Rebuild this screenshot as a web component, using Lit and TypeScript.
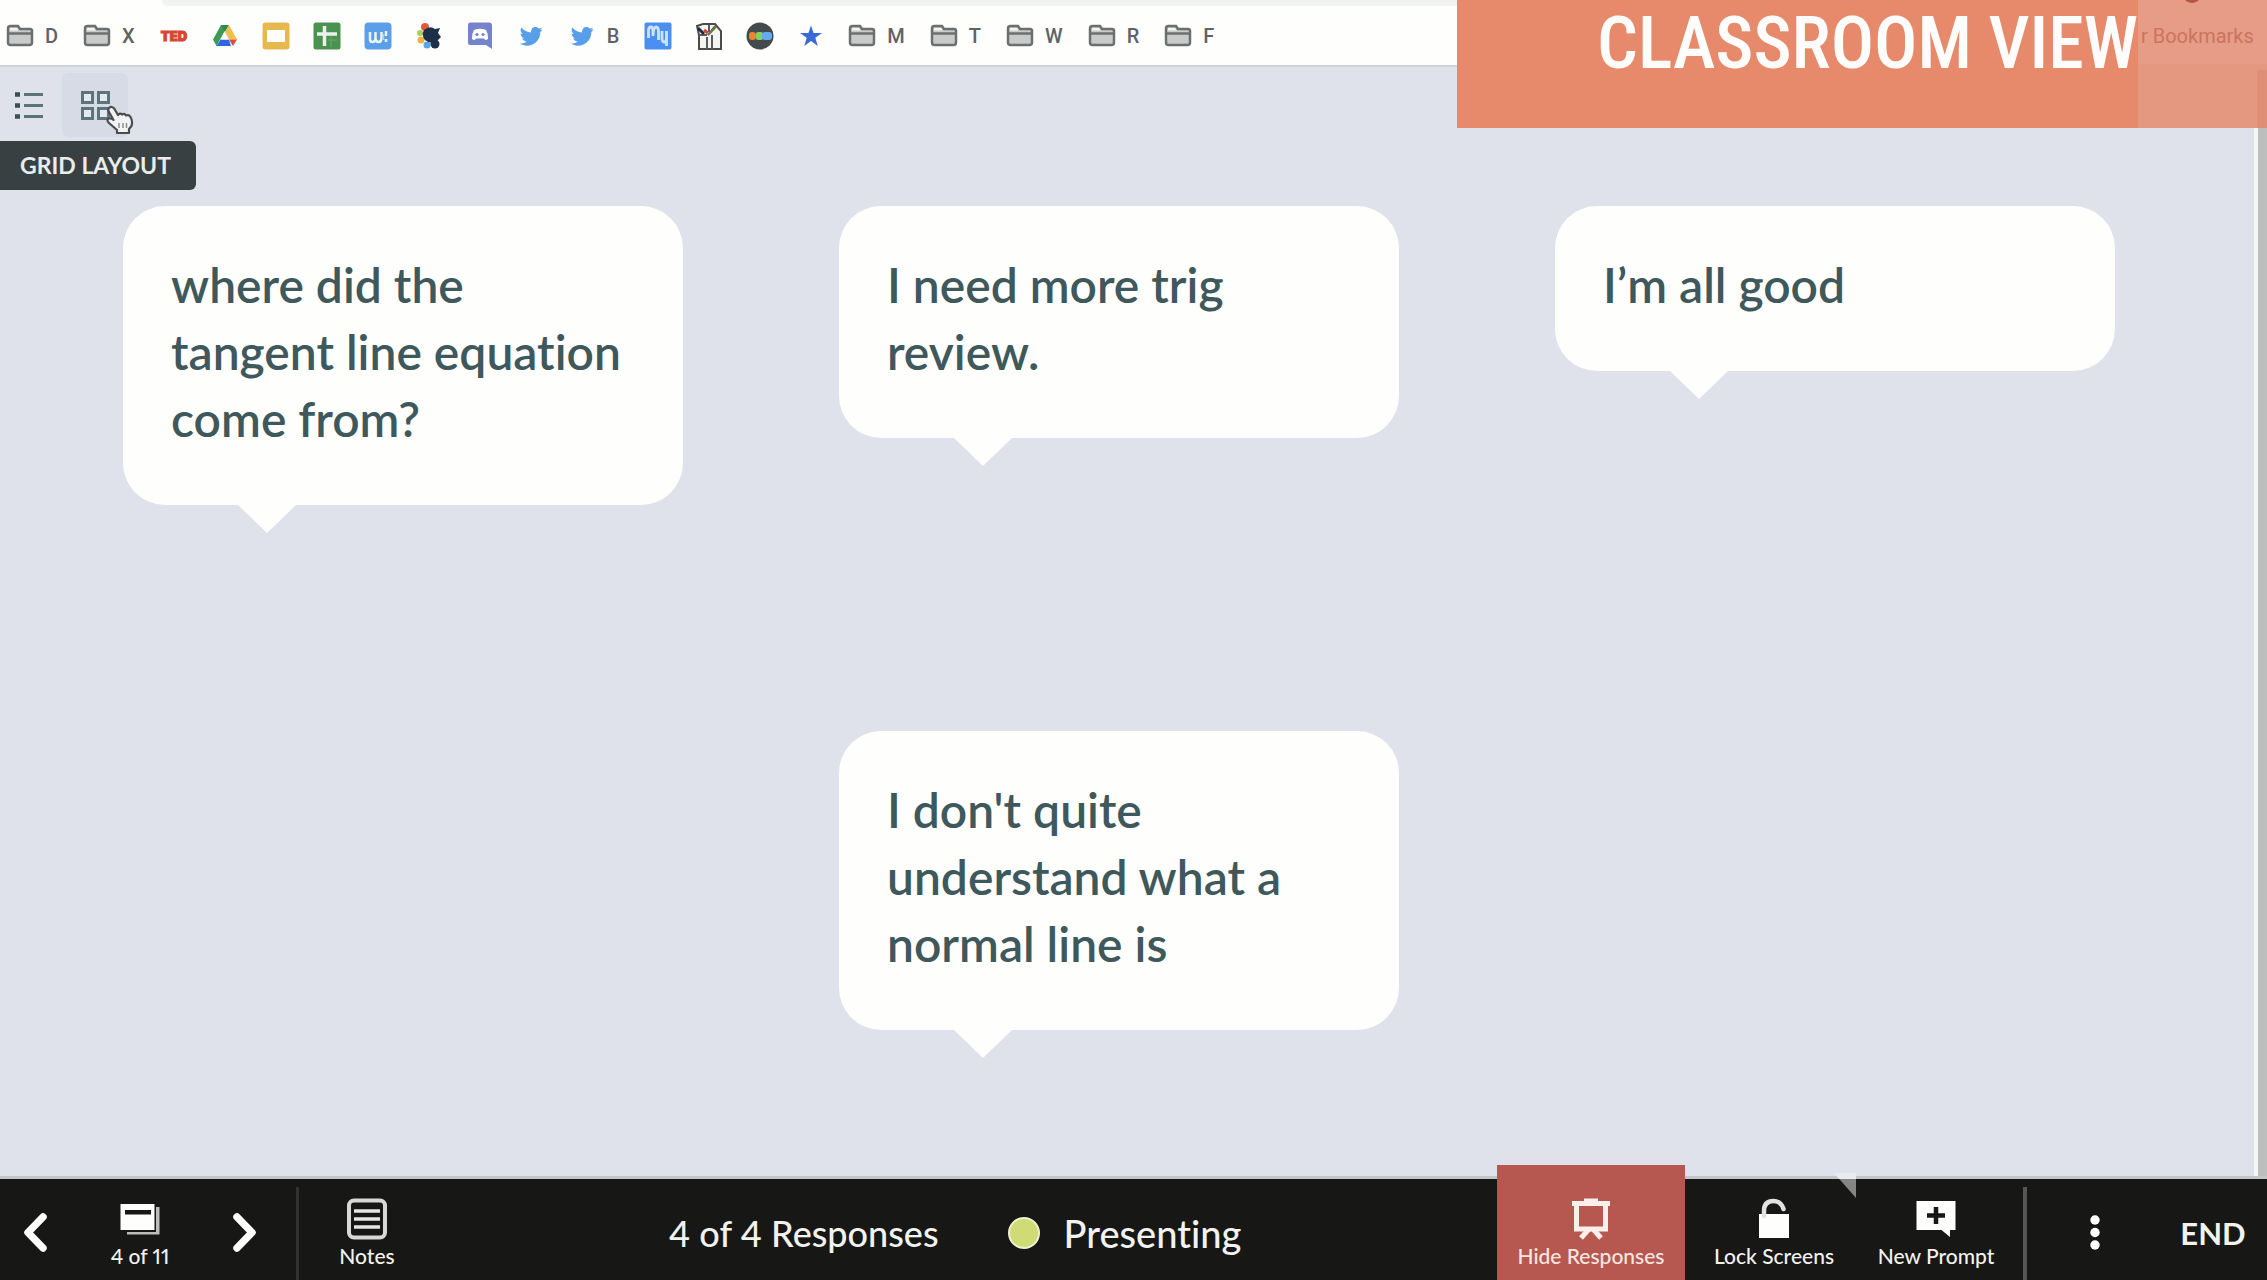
import { LitElement, html, css, svg, TemplateResult } from "lit";
import { customElement, property, state } from "lit/decorators.js";
import { classMap } from "lit/directives/class-map.js";

const icon = (size: string, box: string, body: unknown) =>
  html`<svg class=${size} viewBox=${box} aria-hidden="true">${body}</svg>`;

const folder = icon("fav", "0 0 28 28", svg`
  <path d="M2 7.5V20.5Q2 23 4.5 23H23.500Q26 23 26 20.500V9Q26 7 24 7H14L12 4H4.500Q2 4 2 6.500Z" fill="#c9caca" stroke="#6c6f70" stroke-width="2.500"/>
  <path d="M4 6H11L12.500 8.500H4Z" fill="#f2f3f2"/>
  <path d="M3 11.500H25" stroke="#6c6f70" stroke-width="2.500"/>`);

const ted = icon("fav", "0 0 28 28", svg`
  <text x="14" y="19" text-anchor="middle" font-family="Inter, sans-serif" font-weight="900" font-size="13" fill="#d8452f" stroke="#d8452f" stroke-width="1">TED</text>`);

const drive = icon("fav", "0 0 28 28", svg`
  <path d="M10 3H17L9 17.500L5.500 24L2 17.500Z" fill="#3c9a56"/>
  <path d="M10 3H18L14 10Z" fill="#2e8a49"/>
  <path d="M18 3L26 17.500H18L14 10Z" fill="#efc04a"/>
  <path d="M9.500 17.500H18L20 24H5.500Z" fill="#2f66df"/>
  <path d="M18 17.500H26L22 24Z" fill="#dc4d38"/>
  <path d="M14 11L17.800 17.500H10Z" fill="#fefefd"/>`);

const slides = icon("fav", "0 0 28 28", svg`
  <rect x="0.500" y="0.500" width="27" height="27" rx="3" fill="#e6b94f"/>
  <rect x="5" y="8" width="18" height="12" fill="#fffefa"/>`);

const sheets = icon("fav", "0 0 28 28", svg`
  <rect x="0.500" y="0.500" width="27" height="27" rx="2.500" fill="#4b9150"/>
  <path d="M11.500 4V24M4 12H24" stroke="#e9f3ea" stroke-width="3.500"/>
  <path d="M15 18H24M18 14V25" stroke="#6ba66f" stroke-width="1"/>`);

const wiki = icon("fav", "0 0 28 28", svg`
  <rect x="0.500" y="0.500" width="27" height="27" rx="4" fill="#5c9fe8"/>
  <path d="M6 10V17Q6 20 8.500 20Q11.500 20 11.500 16V10M11.500 16Q11.500 20 14.500 20Q17.500 20 17.500 16V10M22 9V14M22 17V20" fill="none" stroke="#eaf4f4" stroke-width="2.500"/>
  <path d="M19.500 12V18" stroke="#a9dcb4" stroke-width="1.500"/>`);

const pinwheel = icon("fav", "0 0 28 28", svg`
  <circle cx="10" cy="5" r="4" fill="#dd5b3b"/>
  <circle cx="5" cy="11" r="3" fill="#a8cf58"/>
  <circle cx="6" cy="18" r="3.500" fill="#f0b341"/>
  <circle cx="12" cy="23" r="3.500" fill="#58a5ea"/>
  <circle cx="20" cy="22" r="4.500" fill="#1d3047"/>
  <path d="M9 8Q15 3 20 7L25 6L23 11L26 15L22 19Q16 23 10 18Q6 13 9 8Z" fill="#1d3049"/>`);

const discord = icon("fav", "0 0 28 28", svg`
  <path d="M4 0.500H23Q26 0.500 26 3.500V27L20 23H4Q2 23 2 20.500V3Q2 0.500 4 0.500Z" fill="#7683cc"/>
  <path d="M8 8Q14 5.500 20 8Q22.500 12 22 17Q19 19 18 16.500H10Q9 19 6 17Q5.500 12 8 8Z" fill="#fff"/>
  <circle cx="11" cy="12.500" r="1.600" fill="#7683cc"/><circle cx="17" cy="12.500" r="1.600" fill="#7683cc"/>`);

const bird = icon("fav", "0 0 28 28", svg`
  <path d="M25.500 7.300C24.700 7.700 23.800 7.900 22.900 8C23.900 7.500 24.600 6.600 24.900 5.500C24 6 23 6.400 22 6.600C20.200 4.600 17 4.500 15.200 6.500C14.200 7.700 13.800 9.200 14.200 10.500C10.300 10.300 6.700 8.500 4.300 5.500C3 7.700 3.600 10.500 5.700 12C5 12 4.200 11.700 3.600 11.400C3.600 13.700 5.200 15.700 7.400 16.200C6.700 16.400 6 16.400 5.200 16.300C5.800 18.200 7.600 19.600 9.700 19.600C7.700 21.200 5.100 21.900 2.600 21.600C11.800 27.200 23.300 21 23.300 10.500V9.900C24.200 9.200 25 8.300 25.500 7.300Z" fill="#589fe9"/>`);

const mb = icon("fav", "0 0 28 28", svg`
  <rect x="0.500" y="0.500" width="27" height="27" rx="2" fill="#4b8ff0"/>
  <path d="M4.500 16V8Q5 5 7 5Q9 5 9 9V14Q9.500 5 12 5Q14.500 5 14.500 10V18M18 9V16Q18 20 20 20Q22.500 20 22.500 15V9M22.500 15V24" fill="none" stroke="#cfe3f7" stroke-width="2.800"/>`);

const cartoon = icon("fav", "0 0 28 28", svg`
  <path d="M4 13L2 4L8 2L20 2L26 9V27H4Z" fill="#f4f4f2" stroke="#4b4b4a" stroke-width="2"/>
  <path d="M14 3V10M4 13H12M20 4L13 13M17 13V27M12 15V27" stroke="#5c5c5b" stroke-width="2"/>
  <path d="M3 6L9 12" stroke="#1c2a4c" stroke-width="3"/>
  <path d="M9 8L13 11" stroke="#d5443c" stroke-width="3"/>
  <path d="M13 13L21 5" stroke="#6f7c3f" stroke-width="2"/>`);

const rainbow = icon("fav", "0 0 28 28", svg`
  <circle cx="14" cy="14" r="13.500" fill="#444b4d"/>
  <rect x="3" y="10" width="7" height="8" rx="3" fill="#ee8236"/>
  <rect x="10" y="10" width="7" height="8" rx="2" fill="#86cf62"/>
  <rect x="16" y="10" width="10" height="8" rx="3" fill="#65a9ee"/>`);

const star = icon("fav", "0 0 28 28", svg`
  <path d="M14 3.500L16.600 11H25L18.300 15.800L20.800 24L14 19L7.200 24L9.700 15.800L3 11H11.400Z" fill="#3a6ad8"/>`);

interface Bookmark { name: string; art: TemplateResult; label?: string; }
const BOOKMARKS: Bookmark[] = [
  { name: "D", art: folder, label: "D" },
  { name: "X", art: folder, label: "X" },
  { name: "TED", art: ted },
  { name: "Drive", art: drive },
  { name: "Slides", art: slides },
  { name: "Sheets", art: sheets },
  { name: "Wiki", art: wiki },
  { name: "Pinwheel", art: pinwheel },
  { name: "Discord", art: discord },
  { name: "Twitter", art: bird },
  { name: "B", art: bird, label: "B" },
  { name: "Mb", art: mb },
  { name: "Cartoon", art: cartoon },
  { name: "Rainbow", art: rainbow },
  { name: "Star", art: star },
  { name: "M", art: folder, label: "M" },
  { name: "T", art: folder, label: "T" },
  { name: "W", art: folder, label: "W" },
  { name: "R", art: folder, label: "R" },
  { name: "F", art: folder, label: "F" },
];

@customElement("bookmark-bar")
export class BookmarkBar extends LitElement {
  static styles = css`
    :host { display: block; background: #fefefd; border-bottom: 2px solid #d0d3d8; font-family: Roboto, sans-serif; }
    .address { height: 6px; margin-left: 162px; background: #f1f4f3; border-bottom-left-radius: 12px; }
    .links { display: flex; align-items: center; gap: 23px; height: 59px; padding-left: 6px; }
    .link { display: flex; align-items: center; gap: 11px; color: #5f6366; font-size: 20px; font-weight: 500; line-height: 28px; text-decoration: none; }
    .label { padding-right: 2px; }
    .fav { width: 28px; height: 28px; flex: none; display: block; }
  `;
  render() {
    return html`
      <div class="address"></div>
      <nav class="links" aria-label="Bookmarks">
        ${BOOKMARKS.map(b => html`<a class="link" href="#" aria-label=${b.name}>${b.art}${b.label ? html`<span class="label">${b.label}</span>` : ""}</a>`)}
      </nav>`;
  }
}

@customElement("title-banner")
export class TitleBanner extends LitElement {
  static styles = css`
    :host { display: flex; height: 128px; background: #e7896b; }
    .title { margin: 0; padding: 2px 0 0 140px; width: 541px; white-space: nowrap; color: #fffdfb; font: 500 72px/84px "Roboto Condensed", "Liberation Sans", sans-serif; }
    .veil { flex: 1; display: flex; flex-direction: column; background: #e59880; overflow: hidden; }
    .strip { position: relative; height: 64px; box-sizing: border-box; padding: 20px 0 0 3px; background: #e79c87; color: #cb7460; font: 400 20px/32px Roboto, sans-serif; white-space: nowrap; }
    .avatar { position: absolute; left: 44px; top: -17px; width: 20px; height: 20px; border-radius: 50%; background: #b5573f; }
    .track { flex: 1; align-self: flex-end; width: 10px; margin-top: 6px; background: #e08f77; }
  `;
  render() {
    return html`
      <h1 class="title">CLASSROOM VIEW</h1>
      <div class="veil">
        <div class="strip"><span class="avatar"></span>r Bookmarks</div>
        <div class="track"></div>
      </div>`;
  }
}

@customElement("view-switch")
export class ViewSwitch extends LitElement {
  static styles = css`
    :host { position: relative; display: flex; padding: 6px 0 0; font-family: Lato, sans-serif; }
    .mode { display: grid; place-items: center; width: 66px; height: 64px; padding: 0; border: 0; border-radius: 6px; background: none; }
    .mode:first-child { width: 58px; margin-right: 4px; }
    .on { background: #d7dbe5; }
    .glyph { width: 30px; height: 30px; display: block; }
    .tip { position: absolute; left: 0; top: 74px; padding: 0 25px 0 20px; border-radius: 0 6px 6px 0; background: #384042; color: #e9ecec; font-size: 23px; font-weight: 700; line-height: 49px; white-space: nowrap; }
    .hand { position: absolute; left: 105px; top: 38px; width: 29px; height: 30px; }
  `;
  @state() private mode = "grid";
  render() {
    return html`
      <button class=${classMap({ mode: true, on: this.mode === "list" })} aria-label="List layout" @click=${() => (this.mode = "list")}>
        ${icon("glyph", "0 0 30 30", svg`
          <path d="M10 4.500H29M10 15.500H29M10 26.500H29" stroke="#5b7479" stroke-width="3"/>
          <path d="M1 4.500H6M1 15.500H6M1 26.500H6" stroke="#3c4f53" stroke-width="4.500"/>`)}
      </button>
      <button class=${classMap({ mode: true, on: this.mode === "grid" })} aria-label="Grid layout" aria-describedby="tip" @click=${() => (this.mode = "grid")}>
        ${icon("glyph", "0 0 30 30", svg`
          <path d="M2.500 2.500H12.500V12.500H2.500ZM18.500 2.500H28.500V12.500H18.500ZM2.500 18.500H12.500V28.500H2.500ZM18.500 18.500H28.500V28.500H18.500Z" fill="#e4e9f0" stroke="#5d757a" stroke-width="3"/>`)}
      </button>
      <span class="tip" id="tip" role="tooltip">GRID LAYOUT</span>
      ${icon("hand", "0 0 29 30", svg`
        <path d="M4 3Q7 0.500 9.500 4L13 10Q15 7.500 17 9.500Q19.500 8 21 10.500Q24 9.500 25.500 12Q28 16 26.500 21L24 24V28H12V25L4 18Q1 14.500 4 13.500Q6 13 8.500 15L4 7Q2.500 4.500 4 3Z" fill="#f3f3f3" stroke="#4a4d4f" stroke-width="2.200" stroke-linejoin="round"/>
        <path d="M14 18V23M18 18V23M21.500 18V23" stroke="#8e9092" stroke-width="1.500"/>`)}`;
  }
}

@customElement("response-bubble")
export class ResponseBubble extends LitElement {
  static styles = css`
    :host { display: block; position: relative; padding: 45px 48px 53px; border-radius: 42px; background: #fefefd; color: #3f585c; font: 600 48px/67px Lato, sans-serif; font-variant-ligatures: none; }
    .text { margin: 0; }
    .tail { position: absolute; left: 114px; top: 100%; width: 60px; height: 29px; margin-top: -1px; background: #fefefd; clip-path: polygon(0 0, 100% 0, 50% 100%); }
  `;
  @property() text = "";
  render() {
    return html`<p class="text">${this.text}</p><span class="tail"></span>`;
  }
}

@customElement("session-bar")
export class SessionBar extends LitElement {
  static styles = css`
    :host { display: flex; height: 101px; border-top: 3px solid #c3c6c8; background: #171715; color: #f2f2f1; font-family: Lato, sans-serif; font-variant-ligatures: none; font-variant-numeric: proportional-nums; position: relative; }
    .btn { display: flex; flex-direction: column; align-items: center; justify-content: flex-end; box-sizing: border-box; gap: 3px; padding: 0 0 11px; border: 0; background: none; color: inherit; font-family: inherit; font-size: 21px; font-weight: 500; line-height: 26px; font-variant-numeric: inherit; white-space: nowrap; }
    .mid { justify-content: center; padding: 6px 0 0; }
    .prev { width: 72px; }
    .w136 { width: 136px; }
    .next { width: 74px; }
    .lock { position: relative; width: 178px; }
    .prompt { width: 146px; }
    .hide { width: 188px; margin-top: -14px; background: #b65850; color: #f8e6e2; }
    .end { width: 104px; padding-right: 4px; font-size: 31px; font-weight: 700; line-height: 36px; }
    .rule { width: 3px; margin: 8px 0 0 14px; background: #323231; }
    .rule.light { width: 4px; background: #565654; }
    .status { flex: 1; display: flex; align-items: center; justify-content: center; margin-top: 6px; padding-right: 22px; line-height: 48px; font-size: 36px; font-weight: 500; white-space: nowrap; }
    .dot { box-sizing: border-box; width: 32px; height: 32px; margin: 0 24px 0 69px; border: 2px solid #eef2cf; border-radius: 50%; background: #cfdb74; }
    .mode { font-size: 38px; }
    .glyph { width: 42px; height: 42px; display: block; }
    .fold { position: absolute; right: 7px; top: -6px; width: 22px; height: 25px; background: linear-gradient(#e8ebef 0 6px, #858584 6px); clip-path: polygon(0 0, 100% 0, 100% 100%); }
  `;
  render() {
    return html`
      <button class="btn mid prev" aria-label="Previous">${icon("glyph", "0 0 42 42", svg`<path d="M28 5L13 20.500L28 36" fill="none" stroke="#fefefd" stroke-width="7.500" stroke-linecap="round" stroke-linejoin="round"/>`)}</button>
      <button class="btn w136">${icon("glyph", "0 0 42 42", svg`
        <path d="M8 34V36.500H40.500V9H37V34Z" fill="#bdbdbc"/>
        <rect x="1.500" y="6" width="34" height="26" fill="#fefefd"/>
        <rect x="6" y="12" width="26" height="4.500" fill="#171715"/>`)}<span>4 of 11</span></button>
      <button class="btn mid next" aria-label="Next">${icon("glyph", "0 0 42 42", svg`<path d="M13 5L28 20.500L13 36" fill="none" stroke="#fefefd" stroke-width="7.500" stroke-linecap="round" stroke-linejoin="round"/>`)}</button>
      <span class="rule"></span>
      <button class="btn w136">${icon("glyph", "0 0 42 42", svg`
        <rect x="3" y="2.500" width="36" height="37" rx="5" fill="none" stroke="#d8d8d7" stroke-width="4"/>
        <path d="M8 13H34M8 21H34M8 29H34" stroke="#e6e6e5" stroke-width="3.500"/>`)}<span>Notes</span></button>
      <div class="status"><span>4 of 4 Responses</span><span class="dot"></span><span class="mode">Presenting</span></div>
      <button class="btn hide">${icon("glyph", "0 0 42 42", svg`
        <path d="M2 5.500H40M14 3H28" stroke="#fbefec" stroke-width="5"/>
        <path d="M6.500 6V31H35.500V6" fill="none" stroke="#fbefec" stroke-width="5"/>
        <path d="M19 31L11 40M23 31L31 40" stroke="#fbefec" stroke-width="5"/>`)}<span>Hide Responses</span></button>
      <button class="btn lock">${icon("glyph", "0 0 42 42", svg`
        <rect x="6" y="16" width="30" height="24" fill="#fefefd"/>
        <path d="M11 18V13Q11 3 20.500 3Q28 3 30.500 11" fill="none" stroke="#e2e2e1" stroke-width="4.500" stroke-linecap="round"/>`)}<span>Lock Screens</span><span class="fold"></span></button>
      <button class="btn prompt">${icon("glyph", "0 0 42 42", svg`
        <path d="M1.500 3H40.500V32H35V39L26.500 32H1.500Z" fill="#fefefd"/>
        <path d="M21 9V26M12 17.500H30" stroke="#171715" stroke-width="4.500"/>`)}<span>New Prompt</span></button>
      <span class="rule light"></span>
      <button class="btn mid w136" aria-label="More">${icon("glyph", "0 0 42 42", svg`
        <g fill="#fefefd"><circle cx="21" cy="8" r="4.700"/><circle cx="21" cy="20.500" r="4.700"/><circle cx="21" cy="33" r="4.700"/></g>`)}</button>
      <button class="btn mid end">END</button>`;
  }
}

@customElement("app-root")
export class AppRoot extends LitElement {
  static styles = css`
    :host { display: flex; flex-direction: column; position: relative; min-height: 100vh; background: #dfe2eb; overflow: hidden; }
    .banner { position: absolute; top: 0; right: 0; width: 810px; }
    .stage { flex: 1; display: flex; }
    .board { flex: 1; }
    .cards { display: grid; grid-template-columns: repeat(3, 1fr); align-items: start; column-gap: 156px; row-gap: 226px; padding: 69px 139px 0 123px; }
    .center { grid-column: 2; }
    .scroll { width: 9px; border-left: 4px solid #f5f6f5; background: #bdbebe; }
  `;
  render() {
    return html`
      <bookmark-bar></bookmark-bar>
      <main class="stage">
        <div class="board">
          <view-switch></view-switch>
          <section class="cards" aria-label="Responses">
            <response-bubble text="where did the tangent line equation come from?"></response-bubble>
            <response-bubble text="I need more trig review."></response-bubble>
            <response-bubble text="I’m all good"></response-bubble>
            <response-bubble class="center" text="I don't quite understand what a normal line is"></response-bubble>
          </section>
        </div>
        <div class="scroll"></div>
      </main>
      <session-bar></session-bar>
      <title-banner class="banner"></title-banner>`;
  }
}
